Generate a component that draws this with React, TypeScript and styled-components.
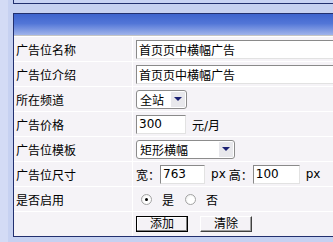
import React from "react";
import styled, { createGlobalStyle } from "styled-components";

const GlobalStyle = createGlobalStyle`
  html, body {
    margin: 0;
    padding: 0;
    overflow: hidden;
  }
  body {
    background: linear-gradient(to right, #d3dbf5 0, #d3dbf5 8px, #c6d1f1 8px);
    font: 12px "DejaVu Sans", "Noto Sans CJK SC", sans-serif;
    color: #000;
  }
`;

const Viewport = styled.div`
  width: 100vw;
  overflow: hidden;
`;

const Page = styled.div`
  padding-left: 13px;
  margin-right: -2px;
`;

const TopBar = styled.div`
  height: 3px;
  background: #c8d3f4;
  border-left: 1px solid #22306f;
  border-bottom: 1px solid #22306f;
  margin-bottom: 9px;
`;

const Panel = styled.div`
  border: 1px solid #22306f;
  background: #fff;
`;

const Header = styled.div`
  height: 21px;
  background: linear-gradient(#3d63cd, #5276d7 45%, #9fb3ea);
  border-bottom: 1px solid #c4c4c4;
`;

const Form = styled.div`
  display: grid;
  grid-template-columns: 118px 1fr;
  grid-auto-rows: 24px;
  gap: 1px;
  padding-top: 1px;
  background: #fff;
`;

const Label = styled.div`
  background: #f5f3f7;
  display: flex;
  align-items: center;
  padding-left: 2px;
  white-space: nowrap;
`;

const Value = styled.div`
  background: #f5f3f7;
  display: flex;
  align-items: center;
  padding-left: 3px;
  white-space: nowrap;
  overflow: hidden;
`;

const Field = styled.input<{ $w: number }>`
  width: ${(p) => p.$w}px;
  flex-shrink: 0;
  height: 19px;
  box-sizing: border-box;
  border: 1px solid;
  border-color: #8a8a8a #e2e2e2 #e2e2e2 #8a8a8a;
  padding: 0 2px;
  margin: 0;
  font: 12px "DejaVu Sans", "Noto Sans CJK SC", sans-serif;
  background: #fff;
  color: #000;
  outline: none;
`;

const Unit = styled.span<{ $gap?: number }>`
  margin-left: ${(p) => p.$gap ?? 6}px;
`;

const Select = styled.div<{ $w: number }>`
  width: ${(p) => p.$w}px;
  height: 19px;
  box-sizing: border-box;
  border: 1px solid #8c8c8c;
  border-radius: 3px;
  background: #fff;
  display: flex;
  align-items: center;
  padding-left: 3px;
`;

const Arrow = styled.span`
  margin: 0 1px 0 auto;
  width: 14px;
  height: 15px;
  background: #e8e8ec;
  display: flex;
  align-items: center;
  justify-content: center;

  &::after {
    content: "";
    border-left: 4px solid transparent;
    border-right: 4px solid transparent;
    border-top: 4px solid #1b2173;
  }
`;

const RadioGroup = styled.div`
  display: flex;
  align-items: center;
  padding-left: 5px;
`;

const Radio = styled.span<{ $checked?: boolean }>`
  width: 11px;
  height: 11px;
  box-sizing: border-box;
  border-radius: 50%;
  border: 1px solid #a3a3a3;
  background: radial-gradient(circle at 60% 60%, #fff 40%, #e6e6e6);
  display: inline-flex;
  align-items: center;
  justify-content: center;
  margin-right: 10px;

  &::after {
    content: "";
    width: 3px;
    height: 3px;
    border-radius: 50%;
    background: ${(p) => (p.$checked ? "#000" : "transparent")};
  }
`;

const RadioText = styled.span`
  margin-right: 11px;
`;

const Button = styled.button<{ $focused?: boolean }>`
  width: 52px;
  height: 16px;
  box-sizing: border-box;
  margin: 0 12px 0 0;
  padding: 0;
  font: 12px "DejaVu Sans", "Noto Sans CJK SC", sans-serif;
  line-height: 14px;
  color: #000;
  background: #f4f2f6;
  border: 1px solid;
  border-color: ${(p) =>
    p.$focused ? "#000" : "#ffffff #404040 #404040 #ffffff"};
  box-shadow: ${(p) =>
    p.$focused
      ? "inset -1px -1px 0 #808080, inset 1px 1px 0 #fff"
      : "inset -1px -1px 0 #a0a0a0"};
`;

export default function App() {
  return (
    <>
      <GlobalStyle />
      <Viewport>
        <Page>
          <TopBar />
          <Panel>
            <Header />
            <Form>
              <Label>广告位名称</Label>
              <Value>
                <Field $w={260} defaultValue="首页页中横幅广告" />
              </Value>

              <Label>广告位介绍</Label>
              <Value>
                <Field $w={260} defaultValue="首页页中横幅广告" />
              </Value>

              <Label>所在频道</Label>
              <Value>
                <Select $w={51}>
                  全站
                  <Arrow />
                </Select>
              </Value>

              <Label>广告价格</Label>
              <Value>
                <Field $w={50} defaultValue="300" />
                <Unit>元/月</Unit>
              </Value>

              <Label>广告位模板</Label>
              <Value>
                <Select $w={99}>
                  矩形横幅
                  <Arrow />
                </Select>
              </Value>

              <Label>广告位尺寸</Label>
              <Value>
                宽：
                <Field $w={45} defaultValue="763" />
                <Unit>px</Unit>
                <Unit $gap={3}>高：</Unit>
                <Field $w={47} defaultValue="100" />
                <Unit>px</Unit>
              </Value>

              <Label>是否启用</Label>
              <Value>
                <RadioGroup>
                  <Radio $checked />
                  <RadioText>是</RadioText>
                  <Radio />
                  <RadioText>否</RadioText>
                </RadioGroup>
              </Value>

              <Label />
              <Value>
                <Button $focused>添加</Button>
                <Button>清除</Button>
              </Value>
            </Form>
          </Panel>
        </Page>
      </Viewport>
    </>
  );
}
